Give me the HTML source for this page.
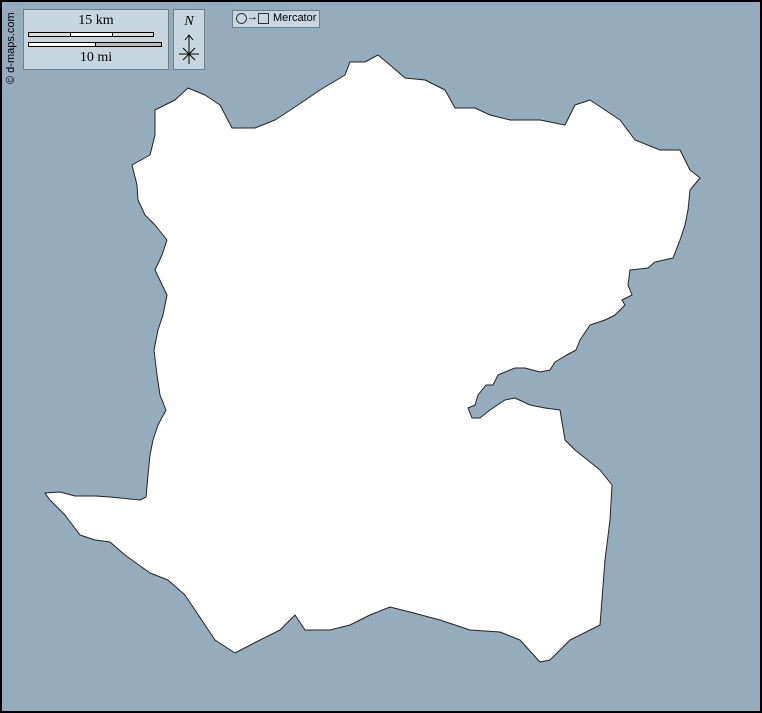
<!DOCTYPE html>
<html><head><meta charset="utf-8"><style>
html,body{margin:0;padding:0;width:762px;height:713px;overflow:hidden;background:#94acbb;font-family:"Liberation Serif",serif}
.frame{position:absolute;left:0;top:0;width:758px;height:709px;border:2px solid #000}
.box{position:absolute;background:#c8d7df;border:1px solid #6e7f88}
</style></head><body>
<svg width="762" height="713" style="position:absolute;left:0;top:0">
<path fill="#fff" stroke="#222" stroke-width="1" stroke-linejoin="round" d="M45,493 L60,492 75,496 95,496 110,497 140,500 146,497 148,475 150,455 153,440 158,425 166,410 160,395 157,375 154,350 158,330 163,315 167,295 155,270 162,255 167,240 155,225 145,215 138,200 137,185 132,165 150,155 155,135 155,110 175,100 188,88 205,95 220,105 232,128 255,128 275,120 295,107 320,90 345,75 350,62 365,62 378,55 390,65 405,78 425,80 445,90 455,108 475,108 490,115 510,120 540,120 565,125 575,105 590,100 605,110 620,120 635,140 660,150 680,150 690,170 700,178 690,190 688,210 685,225 680,240 673,258 655,262 648,268 630,270 628,285 632,295 622,300 625,305 615,315 605,320 590,325 580,340 576,350 565,356 555,362 550,370 540,372 525,368 515,368 505,372 498,375 493,385 486,385 478,395 475,405 468,408 472,418 480,418 490,410 505,400 515,398 530,405 545,408 560,410 565,440 575,450 600,470 612,485 610,520 605,560 600,625 570,640 550,660 540,662 520,640 500,632 470,630 440,620 410,612 390,607 370,615 350,625 330,630 305,630 295,615 280,630 260,640 235,653 215,640 195,610 185,595 168,580 150,573 125,555 110,542 95,540 80,535 65,515 50,500 Z"/>
</svg>
<div class="frame"></div>
<div style="position:absolute;left:1px;top:8px;width:20px;height:80px;">
<div style="position:absolute;left:-30px;top:30px;width:80px;transform:rotate(-90deg);font:11px 'Liberation Sans',sans-serif;color:#000;white-space:nowrap">© d-maps.com</div></div>
<div class="box" style="left:23px;top:9px;width:144px;height:59px">
<div style="position:absolute;left:0;right:0;top:3px;text-align:center;font-size:14px">15 km</div>
<div style="position:absolute;left:4px;top:22px;width:124px;height:3px;border:1px solid #000;background:#ddd"></div>
<div style="position:absolute;left:46px;top:22px;width:41px;height:3px;border-left:1px solid #000;border-right:1px solid #000;border-top:1px solid #000;border-bottom:1px solid #000;background:#fff"></div>
<div style="position:absolute;left:4px;top:32px;width:132px;height:3px;border:1px solid #000;background:#bbb"></div>
<div style="position:absolute;left:4px;top:32px;width:66px;height:3px;border:1px solid #000;background:#fff"></div>
<div style="position:absolute;left:0;right:0;top:40px;text-align:center;font-size:14px">10 mi</div>
</div>
<div class="box" style="left:173px;top:9px;width:30px;height:59px">
<div style="position:absolute;left:0;right:0;top:4px;text-align:center;font-size:14px;font-style:italic">N</div>
<svg width="30" height="40" style="position:absolute;left:0;top:22px"><path d="M15,4 V32 M11,8 L15,3 19,8 M5,22 H25 M9,16 L21,28 M21,16 L9,28" stroke="#000" fill="none" stroke-width="1"/></svg>
</div>
<div class="box" style="left:232px;top:10px;width:86px;height:16px;font:11px 'Liberation Sans',sans-serif">
<span style="position:absolute;left:3px;top:2px;width:9px;height:9px;border:1px solid #333;border-radius:50%"></span>
<span style="position:absolute;left:14px;top:0px">→</span>
<span style="position:absolute;left:25px;top:2px;width:9px;height:9px;border:1px solid #333"></span>
<span style="position:absolute;left:40px;top:1px">Mercator</span>
</div>
</body></html>
